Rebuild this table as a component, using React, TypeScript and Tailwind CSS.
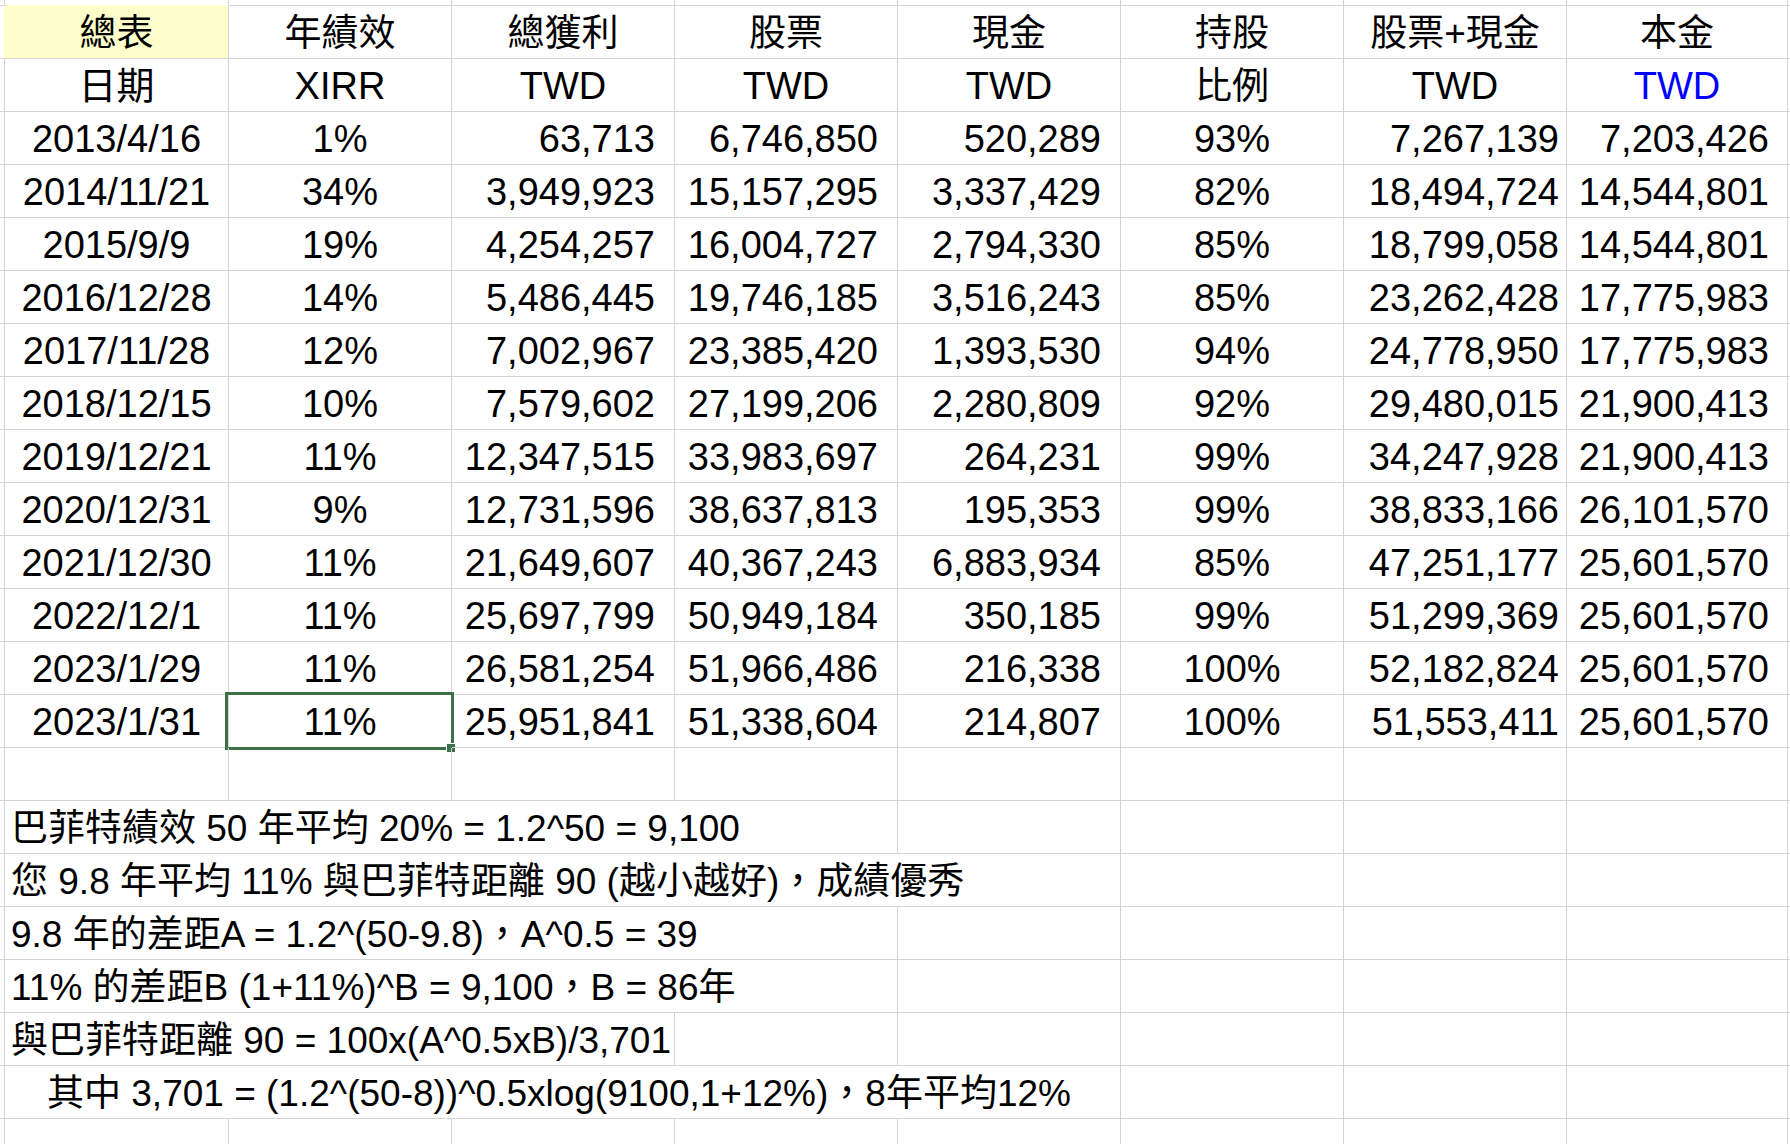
import React from "react";

const grid = "border-[#d4d4d4]";

const cols = ["w-[224px]", "w-[223px]", "w-[223px]", "w-[223px]", "w-[223px]", "w-[223px]", "w-[223px]", "w-[221px]"];

const head1 = ["總表", "年績效", "總獲利", "股票", "現金", "持股", "股票+現金", "本金"];
const head2 = ["日期", "XIRR", "TWD", "TWD", "TWD", "比例", "TWD", "TWD"];

const rows = [
  ["2013/4/16", "1%", "63,713", "6,746,850", "520,289", "93%", "7,267,139", "7,203,426"],
  ["2014/11/21", "34%", "3,949,923", "15,157,295", "3,337,429", "82%", "18,494,724", "14,544,801"],
  ["2015/9/9", "19%", "4,254,257", "16,004,727", "2,794,330", "85%", "18,799,058", "14,544,801"],
  ["2016/12/28", "14%", "5,486,445", "19,746,185", "3,516,243", "85%", "23,262,428", "17,775,983"],
  ["2017/11/28", "12%", "7,002,967", "23,385,420", "1,393,530", "94%", "24,778,950", "17,775,983"],
  ["2018/12/15", "10%", "7,579,602", "27,199,206", "2,280,809", "92%", "29,480,015", "21,900,413"],
  ["2019/12/21", "11%", "12,347,515", "33,983,697", "264,231", "99%", "34,247,928", "21,900,413"],
  ["2020/12/31", "9%", "12,731,596", "38,637,813", "195,353", "99%", "38,833,166", "26,101,570"],
  ["2021/12/30", "11%", "21,649,607", "40,367,243", "6,883,934", "85%", "47,251,177", "25,601,570"],
  ["2022/12/1", "11%", "25,697,799", "50,949,184", "350,185", "99%", "51,299,369", "25,601,570"],
  ["2023/1/29", "11%", "26,581,254", "51,966,486", "216,338", "100%", "52,182,824", "25,601,570"],
  ["2023/1/31", "11%", "25,951,841", "51,338,604", "214,807", "100%", "51,553,411", "25,601,570"],
];

// number columns: right aligned, padding differs per column
const align = [
  "justify-center",
  "justify-center",
  "justify-end pr-[19px]",
  "justify-end pr-[19px]",
  "justify-end pr-[19px]",
  "justify-center",
  "justify-end pr-[7px]",
  "justify-end pr-[18px]",
];

// notes below the table: text, columns it runs over, width of the merged area
const notes: [string, number, string][] = [
  ["巴菲特績效 50 年平均 20% = 1.2^50 = 9,100", 4, "w-[893px]"],
  ["您 9.8 年平均 11% 與巴菲特距離 90 (越小越好)，成績優秀", 5, "w-[1116px]"],
  ["9.8 年的差距A = 1.2^(50-9.8)，A^0.5 = 39", 4, "w-[893px]"],
  ["11% 的差距B (1+11%)^B = 9,100，B = 86年", 4, "w-[893px]"],
  ["與巴菲特距離 90 = 100x(A^0.5xB)/3,701", 3, "w-[670px]"],
  ["其中 3,701 = (1.2^(50-8))^0.5xlog(9100,1+12%)，8年平均12%", 5, "w-[1116px]"],
];

function Row({ children, first, tall = true }: { children?: React.ReactNode; first?: string; tall?: boolean }) {
  return (
    <div className={`flex ${tall ? "h-[53px]" : "h-[6px]"}`}>
      <div className={`w-[5px] shrink-0 border-r border-b ${grid} ${first ?? ""}`} />
      {children}
      <div className={`flex-1 border-b ${grid}`} />
    </div>
  );
}

function Cell({ w, className = "", children }: { w: string; className?: string; children?: React.ReactNode }) {
  return (
    <div className={`relative flex shrink-0 items-end whitespace-nowrap border-r border-b pb-[6px] ${grid} ${w} ${className}`}>
      {children}
    </div>
  );
}

function EmptyCells({ from }: { from: number }) {
  return (
    <>
      {cols.slice(from).map((w, i) => (
        <Cell key={i} w={w} />
      ))}
    </>
  );
}

export default function App() {
  return (
    <div
      className="h-[1144px] w-[1790px] overflow-hidden bg-white text-[38px] leading-[38px] text-black"
      style={{ fontFamily: '"Liberation Sans", Arial, "Noto Sans CJK TC", sans-serif' }}
    >
      <Row tall={false}>
        {cols.map((w, i) => (
          <div key={i} className={`shrink-0 border-r border-b ${grid} ${w} ${i === 0 ? "border-b-[#ffffcc]" : ""}`} />
        ))}
      </Row>

      <Row first="border-r-[#ffffcc]">
        {head1.map((t, i) => (
          <Cell key={i} w={cols[i]} className={`justify-center text-[37px] leading-[37px] ${i === 0 ? "bg-[#ffffcc]" : ""}`}>
            {t}
          </Cell>
        ))}
      </Row>

      <Row>
        {head2.map((t, i) => (
          <Cell key={i} w={cols[i]} className={`justify-center ${i === 5 ? "text-[37px] leading-[37px]" : ""} ${i === 7 ? "text-[#0000ff]" : ""}`}>
            {t}
          </Cell>
        ))}
      </Row>

      {rows.map((r, ri) => (
        <Row key={ri}>
          {r.map((t, i) => (
            <Cell key={i} w={cols[i]} className={align[i]}>
              {t}
              {ri === rows.length - 1 && i === 1 && (
                <>
                  <div className="absolute -left-[4px] -top-[3px] -right-[3px] -bottom-[3px] border-[3px] border-[#3d7049]" />
                  <div className="absolute -right-[5px] -bottom-[6px] h-[10px] w-[10px] border border-white bg-[#3d7049]" />
                </>
              )}
            </Cell>
          ))}
        </Row>
      ))}

      <Row>
        <EmptyCells from={0} />
      </Row>

      {notes.map(([t, span, w], i) => (
        <Row key={i}>
          <Cell w={w} className={`text-[37px] leading-[37px] ${i === 5 ? "pl-[42px]" : "pl-[6px]"}`}>
            {t}
          </Cell>
          <EmptyCells from={span} />
        </Row>
      ))}

      <Row>
        <EmptyCells from={0} />
      </Row>
    </div>
  );
}
